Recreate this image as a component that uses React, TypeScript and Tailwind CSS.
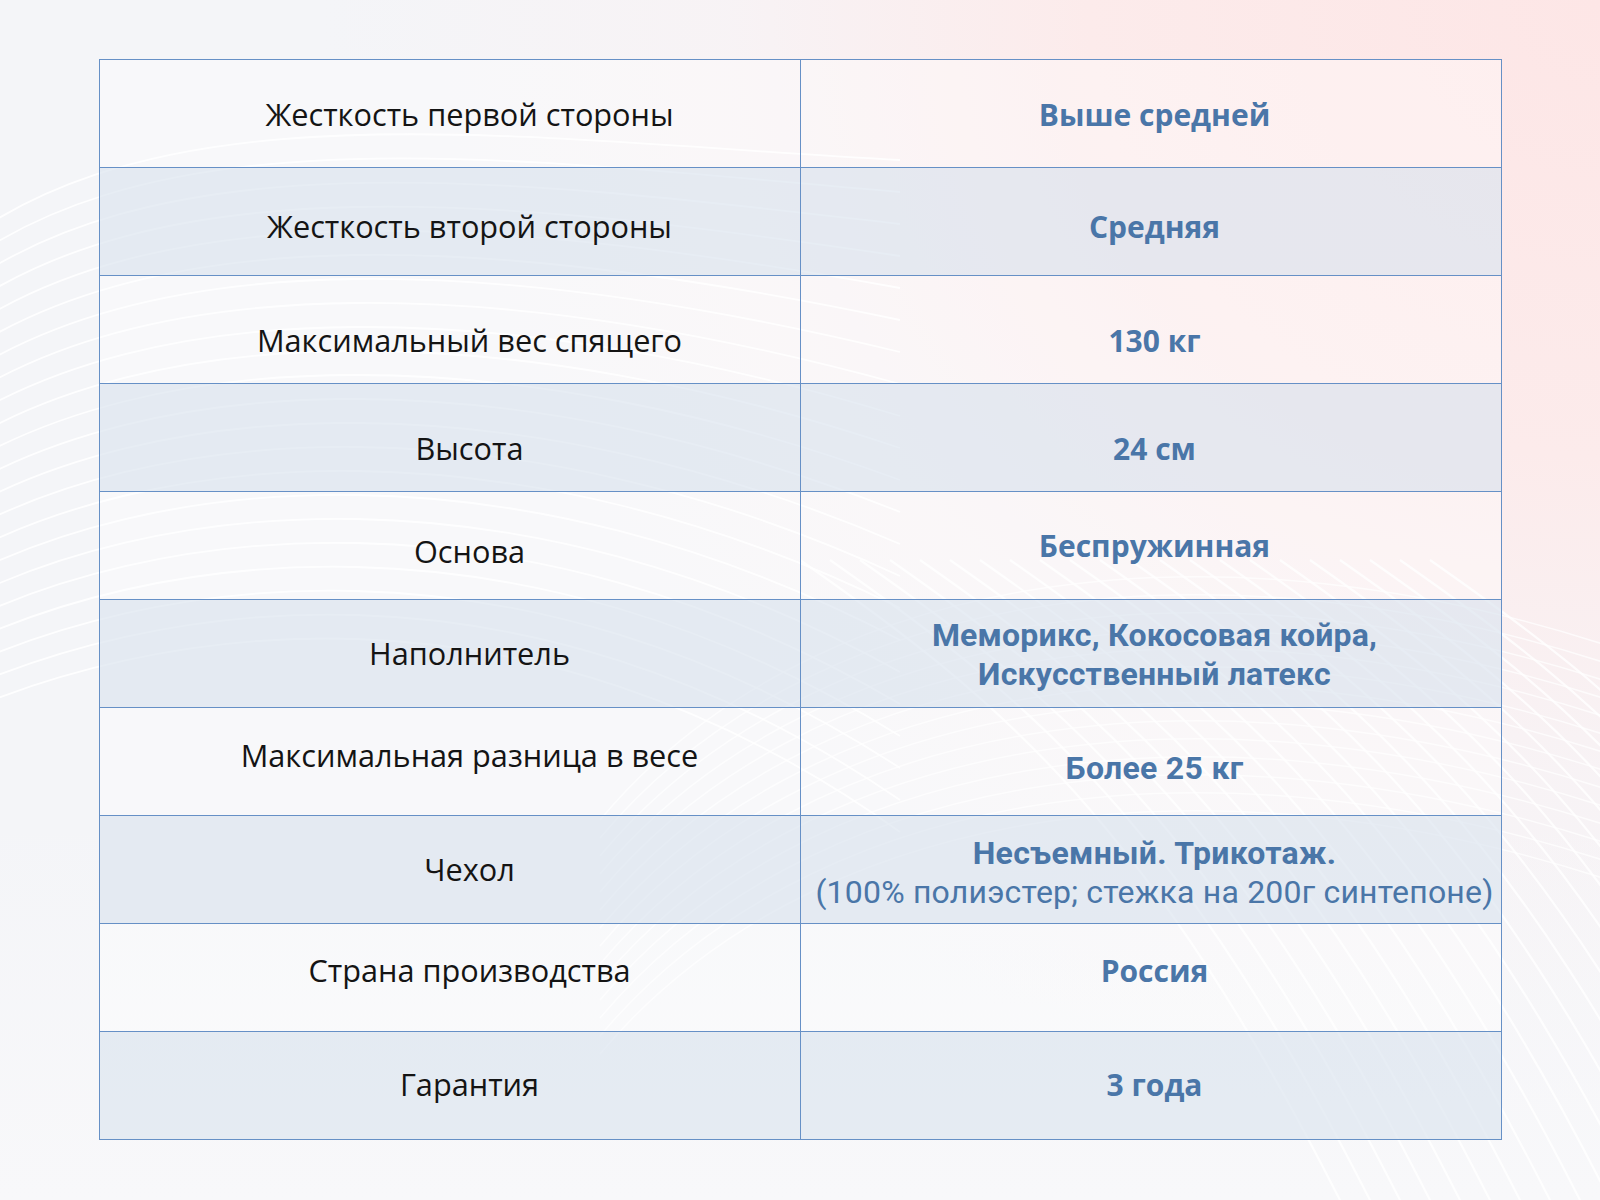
import React from "react";

type Row = {
  label: string;
  lOff: string;
  rOff: string;
  value: React.ReactNode;
};

const nun = { fontFamily: '"Open Sans", "Noto Sans", sans-serif' };

const rows: Row[] = [
  {
    label: "Жесткость первой стороны",
    lOff: "pt-[2px]",
    rOff: "pt-[2px]",
    value: <span className="font-['Open_Sans',sans-serif] font-bold text-[30px]">Выше средней</span>,
  },
  {
    label: "Жесткость второй стороны",
    lOff: "pt-[10px]",
    rOff: "pt-[10px]",
    value: <span className="font-['Open_Sans',sans-serif] font-bold text-[30px]">Средняя</span>,
  },
  {
    label: "Максимальный вес спящего",
    lOff: "pt-[22px]",
    rOff: "pt-[22px]",
    value: <span className="font-['Open_Sans',sans-serif] font-bold text-[30px]">130 кг</span>,
  },
  {
    label: "Высота",
    lOff: "pt-[22px]",
    rOff: "pt-[22px]",
    value: <span className="font-['Open_Sans',sans-serif] font-bold text-[30px]">24 см</span>,
  },
  {
    label: "Основа",
    lOff: "pt-[12px]",
    rOff: "pt-[0px]",
    value: <span className="font-['Open_Sans',sans-serif] font-bold text-[30px]">Беспружинная</span>,
  },
  {
    label: "Наполнитель",
    lOff: "pt-[0px]",
    rOff: "pt-[2px]",
    value: (
      <div className="flex flex-col items-center font-['Roboto',sans-serif] font-bold text-[32px] leading-[39px] tracking-[0.2px]">
        <span>Мемори{"к"}с, Кокосовая койра,</span>
        <span>Искусственный латекс</span>
      </div>
    ),
  },
  {
    label: "Максимальная разница в весе",
    lOff: "pb-[12px]",
    rOff: "pt-[12px]",
    value: <span className="font-['Roboto',sans-serif] font-bold text-[32px] tracking-[0.3px]">Более 25 кг</span>,
  },
  {
    label: "Чехол",
    lOff: "",
    rOff: "pt-[7px]",
    value: (
      <div className="flex flex-col items-center font-['Roboto',sans-serif] text-[32px] leading-[39px]">
        <span className="font-bold tracking-[0.3px]">Несъемный. Трикотаж.</span>
        <span className="font-normal tracking-[0.2px] whitespace-nowrap">(100% полиэстер; стежка на 200г синтепоне)</span>
      </div>
    ),
  },
  {
    label: "Страна производства",
    lOff: "pb-[14px]",
    rOff: "pb-[14px]",
    value: <span className="font-['Open_Sans',sans-serif] font-bold text-[30px]">Россия</span>,
  },
  {
    label: "Гарантия",
    lOff: "pb-[2px]",
    rOff: "pb-[2px]",
    value: <span className="font-['Open_Sans',sans-serif] font-bold text-[30px]">3 года</span>,
  },
];

function Waves() {
  const left: string[] = [];
  for (let i = 0; i < 22; i++) {
    const y0 = 200 + i * 22;
    left.push(
      `M -60 ${y0 + 60} C 150 ${y0 - 120 + i * 4}, 520 ${y0 - 60 - i * 2}, 900 ${y0 - 40 + i * 10}`
    );
  }
  const right: string[] = [];
  for (let i = 0; i < 22; i++) {
    const x0 = 1100 + i * 30;
    right.push(
      `M ${x0 - 300} 560 C ${x0 - 100} 700, ${x0 + 50} 820, ${x0 + 250} 1220`
    );
  }
  const mid: string[] = [];
  for (let i = 0; i < 14; i++) {
    const y0 = 620 + i * 18;
    mid.push(`M 600 ${y0 + 200} C 800 ${y0 - 40}, 1200 ${y0 - 120}, 1650 ${y0 + 40}`);
  }
  return (
    <svg
      className="pointer-events-none absolute inset-0 h-full w-full"
      viewBox="0 0 1600 1200"
      preserveAspectRatio="none"
      fill="none"
    >
      {left.map((d, i) => (
        <path key={"l" + i} d={d} stroke="#ffffff" strokeOpacity={0.9} strokeWidth={1.8} />
      ))}
      {mid.map((d, i) => (
        <path key={"m" + i} d={d} stroke="#ffffff" strokeOpacity={0.7} strokeWidth={1.5} />
      ))}
      {right.map((d, i) => (
        <path key={"r" + i} d={d} stroke="#ffffff" strokeOpacity={0.8} strokeWidth={2.2} />
      ))}
    </svg>
  );
}

export default function App() {
  return (
    <div className="relative h-[1200px] w-[1600px] overflow-hidden bg-[#f4f5f8]">
      <div className="absolute inset-0 bg-[radial-gradient(ellipse_80%_95%_at_100%_0%,#fde6e6_0%,#fcebeb_40%,rgba(249,242,244,0.7)_68%,rgba(246,246,248,0)_100%)]" />
      <div className="absolute inset-0 bg-[linear-gradient(180deg,rgba(246,246,248,0)_68%,#f8f8fa_100%)]" />
      <Waves />
      <div className="relative flex justify-center pt-[59px]">
        <div className="w-[1403px] border-x border-t border-[#6690c6]">
          {rows.map((r, i) => (
            <div
              key={i}
              className={
                "grid h-[108px] grid-cols-[701px_1fr] border-b border-[#6690c6] " +
                (i % 2 === 1 ? "bg-[#dde5f0]/70" : "bg-white/35")
              }
            >
              <div
                className={
                  "flex items-center justify-center border-r border-[#6690c6] pl-[40px] text-[30.7px] text-[#141414] " +
                  r.lOff
                }
                style={nun}
              >
                {r.label}
              </div>
              <div
                className={
                  "flex items-center justify-center pl-[8px] text-[#4a76a8] " + r.rOff
                }
              >
                {r.value}
              </div>
            </div>
          ))}
        </div>
      </div>
    </div>
  );
}
